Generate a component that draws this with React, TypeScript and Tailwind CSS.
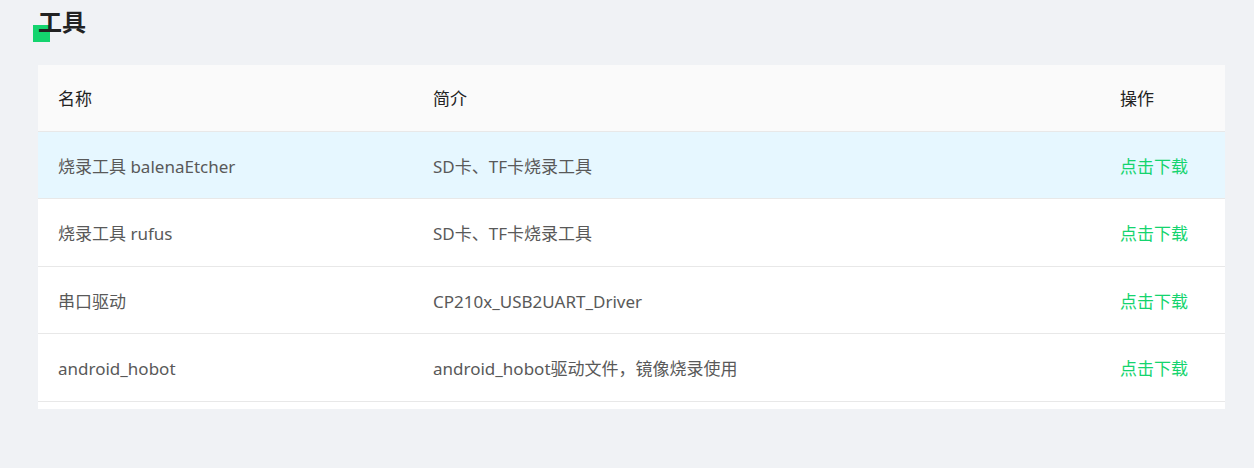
const rows = [
  { name: "烧录工具 balenaEtcher", desc: "SD卡、TF卡烧录工具", hover: true },
  { name: "烧录工具 rufus", desc: "SD卡、TF卡烧录工具" },
  { name: "串口驱动", desc: "CP210x_USB2UART_Driver" },
  { name: "android_hobot", desc: "android_hobot驱动文件，镜像烧录使用" },
];

export default function App() {
  return (
    <div
      className="min-h-[468px] bg-[#f0f2f5] pl-[38px] pr-[29px] pt-[5px]"
      style={{ fontFamily: '"Noto Sans", "Noto Sans CJK SC", sans-serif' }}
    >
      <h2 className="relative h-[41px] text-[24px] font-bold leading-[34px] text-[#222]">
        <span className="absolute left-[-5px] top-[20px] h-[17px] w-[17px] bg-[#14d46e]" />
        <span className="relative">工具</span>
      </h2>
      <div className="mt-[19px] bg-white pb-[7px]">
        <table className="w-full border-collapse text-[17px]">
          <thead>
            <tr className="h-[66px] bg-[#fafafa] text-left text-[#222]">
              <th className="w-[375px] border-b border-[#e8e8e8] pl-[20px] pt-[2px] font-normal">名称</th>
              <th className="border-b border-[#e8e8e8] pl-[20px] pt-[2px] font-normal">简介</th>
              <th className="w-[125px] border-b border-[#e8e8e8] pl-[20px] pt-[2px] font-normal">操作</th>
            </tr>
          </thead>
          <tbody>
            {rows.map((r) => (
              <tr
                key={r.name}
                className={`h-[67.5px] text-[#595959] ${r.hover ? "bg-[#e6f7ff]" : "bg-white"}`}
              >
                <td className="border-b border-[#e8e8e8] pl-[20px] pt-[3px]">{r.name}</td>
                <td className="border-b border-[#e8e8e8] pl-[20px] pt-[3px]">{r.desc}</td>
                <td className="border-b border-[#e8e8e8] pl-[20px] pt-[3px] text-[#14d46e]">点击下载</td>
              </tr>
            ))}
          </tbody>
        </table>
      </div>
    </div>
  );
}
